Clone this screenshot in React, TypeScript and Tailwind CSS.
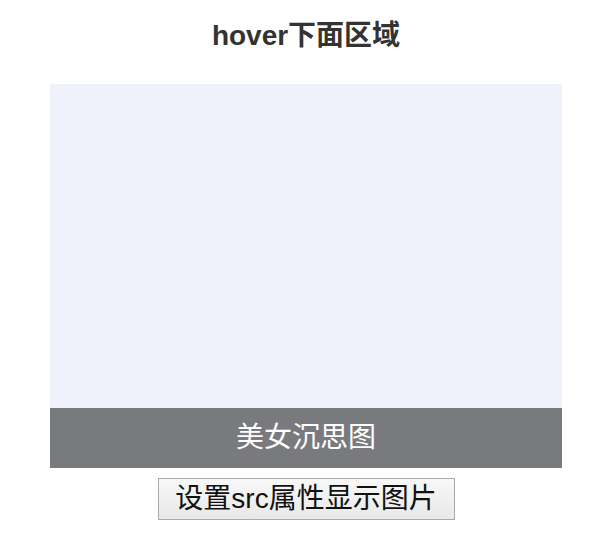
import React from 'react';

const App: React.FC = () => {
  return (
    <div
      className="min-h-screen bg-white text-[#333]"
      style={{ fontFamily: '"Liberation Sans", "Noto Sans CJK SC", sans-serif' }}
    >
      <div className="w-[612px]">
        {/* 标题 */}
        <h3 className="pt-[18px] h-[84px] text-center text-[28px] font-bold leading-[36px] text-[#333]">
          hover下面区域
        </h3>

        {/* 图片区域 */}
        <div className="mx-auto w-[512px] h-[384px] bg-[#eff2fb] flex flex-col justify-end">
          <div className="h-[60px] bg-[#797a7e] flex items-center justify-center text-white text-[28px]">
            美女沉思图
          </div>
        </div>

        {/* 按钮 */}
        <div className="flex justify-center pt-[10px]">
          <button className="h-[42px] w-[297px] border border-[#a9a9a9] bg-gradient-to-b from-[#f8f8f8] to-[#e8e8e8] text-[28px] leading-none text-[#111]">
            设置src属性显示图片
          </button>
        </div>
      </div>
    </div>
  );
};

export default App;
